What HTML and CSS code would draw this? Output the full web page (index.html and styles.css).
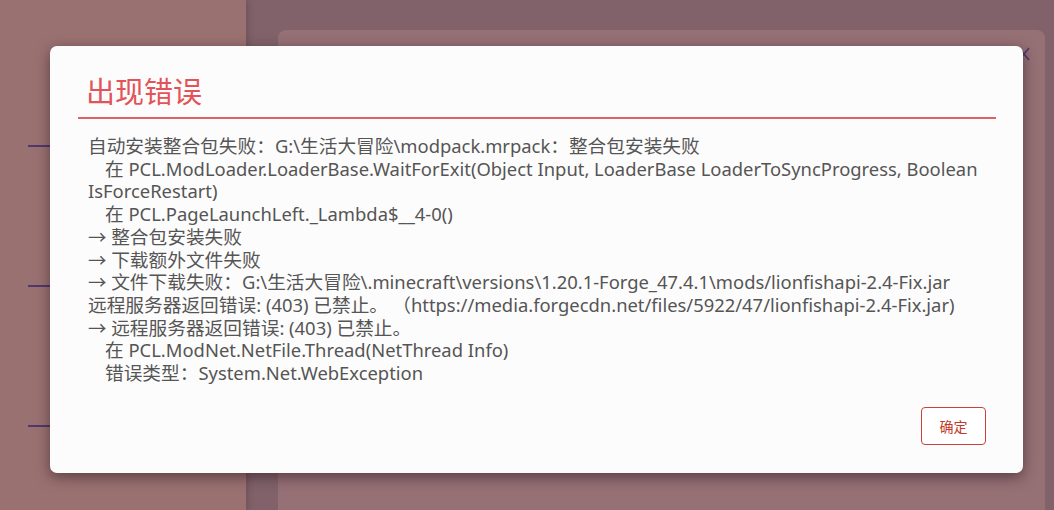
FILE: index.html
```html
<!DOCTYPE html>
<html lang="zh-CN">
<head>
<meta charset="utf-8">
<link rel="stylesheet" href="styles.css">
</head>
<body>
<div class="page">
  <aside class="side">
    <div class="tick"></div>
    <div class="tick"></div>
    <div class="tick"></div>
  </aside>
  <main class="main">
    <div class="card">
      <svg class="close" width="12" height="14" viewBox="0 0 12 14"><path d="M1 1 L11 13 M11 1 L1 13" stroke="#4a3a6a" stroke-width="1.6" fill="none"/></svg>
    </div>
  </main>
</div>
<div class="dialog">
  <h1 class="title">出现错误</h1>
  <div class="rule"></div>
  <div class="body">
    <p><span class="zh">自动安装整合包失败：</span>G:\<span class="zh">生活大冒险</span>\modpack.mrpack<span class="zh">：整合包安装失败</span></p>
    <p class="ind"><span class="zh">在</span> PCL.ModLoader.LoaderBase.WaitForExit(Object Input, LoaderBase LoaderToSyncProgress, Boolean IsForceRestart)</p>
    <p class="ind"><span class="zh">在</span> PCL.PageLaunchLeft._Lambda$__4-0()</p>
    <p>→ <span class="zh">整合包安装失败</span></p>
    <p>→ <span class="zh">下载额外文件失败</span></p>
    <p>→ <span class="zh">文件下载失败：</span>G:\<span class="zh">生活大冒险</span>\.minecraft\versions\1.20.1-Forge_47.4.1\mods/lionfishapi-2.4-Fix.jar</p>
    <p><span class="zh">远程服务器返回错误</span>: (403) <span class="zh">已禁止。 （</span>https://media.forgecdn.net/files/5922/47/lionfishapi-2.4-Fix.jar)</p>
    <p>→ <span class="zh">远程服务器返回错误</span>: (403) <span class="zh">已禁止。</span></p>
    <p class="ind"><span class="zh">在</span> PCL.ModNet.NetFile.Thread(NetThread Info)</p>
    <p class="ind"><span class="zh">错误类型：</span>System.Net.WebException</p>
  </div>
  <div class="actions">
    <button class="btn">确定</button>
  </div>
</div>
</body>
</html>
```

FILE: styles.css
```css
* { box-sizing: border-box; }
html, body { margin: 0; padding: 0; }
body {
  width: 1054px;
  height: 510px;
  overflow: hidden;
  position: relative;
  font-family: "Noto Sans", "Noto Sans CJK SC", sans-serif;
  background: #81626a;
}
.page {
  display: flex;
  height: 510px;
}
.side {
  width: 246px;
  background: #9a7171;
  display: flex;
  flex-direction: column;
  padding-top: 145px;
  gap: 138px;
  box-shadow: 2px 0 6px rgba(60,30,40,0.25);
}
.tick {
  margin-left: 28px;
  width: 22px;
  height: 2px;
  background: #4c3a6c;
}
.main {
  flex: 1;
  padding: 30px 9px 0 32px;
}
.card {
  position: relative;
  height: 480px;
  background: #957075;
  border-radius: 8px 8px 0 0;
}
.close {
  position: absolute;
  left: 740px;
  top: 17px;
}
.dialog {
  position: absolute;
  left: 50px;
  top: 46px;
  width: 973px;
  height: 427px;
  background: #fdfcfc;
  border-radius: 7px;
  box-shadow: 0 4px 14px rgba(40,20,30,0.55);
  padding: 26px 27px 0 28px;
}
.title {
  margin: 0 0 0 8px;
  font-weight: 400;
  font-size: 29px;
  line-height: 36px;
  color: #e25457;
  font-family: "Noto Sans CJK SC", sans-serif;
}
.rule {
  margin-top: 9px;
  height: 2px;
  background: #dc6264;
}
.body {
  margin: 16px 0 0 10px;
  width: 910px;
  color: #555;
  font-size: 18.4px;
  line-height: 22.7px;
}
.body p { margin: 0; }
.body .ind { text-indent: 17px; }
.zh {
  font-family: "Noto Sans CJK SC", sans-serif;
  font-size: 18.7px;
  line-height: 1;
}
.actions {
  display: flex;
  justify-content: flex-end;
  margin-top: 22px;
  padding-right: 10px;
}
.btn {
  width: 65px;
  height: 38px;
  background: #fff;
  border: 1px solid #c8423a;
  border-radius: 4px;
  color: #c0392b;
  font-family: "Noto Sans CJK SC", sans-serif;
  font-size: 14px;
  padding: 0;
}
```
